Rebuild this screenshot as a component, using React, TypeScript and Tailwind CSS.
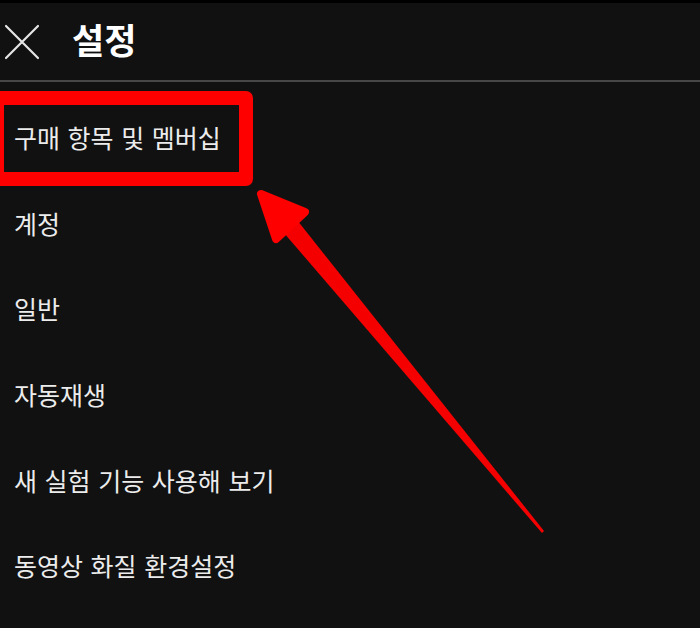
import React from "react";

const ITEMS = [
  "구매 항목 및 멤버십",
  "계정",
  "일반",
  "자동재생",
  "새 실험 기능 사용해 보기",
  "동영상 화질 환경설정",
];

function CloseIcon() {
  return (
    <svg width="36" height="36" viewBox="0 0 36 36" className="shrink-0">
      <path d="M2 2 L34 34 M34 2 L2 34" stroke="#e6e6e6" strokeWidth="2.2" strokeLinecap="round" />
    </svg>
  );
}

// annotation arrow pointing at the highlighted row
function Arrow() {
  return (
    <svg className="absolute inset-0 pointer-events-none" width="700" height="628" viewBox="0 0 700 628">
      <polygon points="297,220 544,531 542,533 284,233" fill="#f50000" />
      <polygon
        points="261,194 305,212 276,239"
        fill="#ff0000"
        stroke="#ff0000"
        strokeWidth="8"
        strokeLinejoin="round"
      />
    </svg>
  );
}

export default function App() {
  return (
    <div
      className="relative w-[700px] h-[628px] overflow-hidden bg-[#111111] text-[#ececec]"
      style={{ fontFamily: '"Noto Sans CJK KR", "Noto Sans", sans-serif' }}
    >
      <div className="h-[3px] bg-black" />
      <header className="h-[79px] flex items-center pl-[4px] gap-[32px] border-b-2 border-[#474747]">
        <CloseIcon />
        <h1 className="text-[35px] font-bold text-white leading-none pb-[6px]">설정</h1>
      </header>
      <ul className="pt-[12px]">
        {ITEMS.map((label) => (
          <li key={label} className="h-[85.6px] flex items-center pl-[14px]">
            <span className="text-[25px] leading-none [word-spacing:2px] pt-[2px]">{label}</span>
          </li>
        ))}
      </ul>
      <div className="absolute left-[-10px] top-[91px] w-[263px] h-[95px] border-[14px] border-[#ff0000] rounded-[7px]" />
      <Arrow />
    </div>
  );
}
